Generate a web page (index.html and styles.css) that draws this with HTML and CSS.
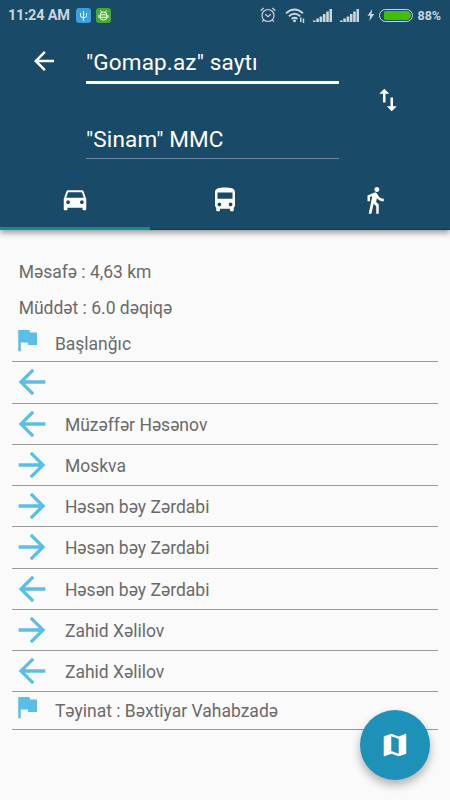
FILE: index.html
```html
<!DOCTYPE html>
<html lang="az">
<head>
<meta charset="utf-8">
<title>Gomap</title>
<link rel="stylesheet" href="styles.css">
</head>
<body>
<svg class="defs" width="0" height="0">
  <symbol id="back" viewBox="0 0 24 24"><path d="M20 11H7.83l5.59-5.59L12 4l-8 8 8 8 1.41-1.41L7.83 13H20v-2z"/></symbol>
  <symbol id="forward" viewBox="0 0 24 24"><path d="M12 4l-1.41 1.41L16.17 11H4v2h12.17l-5.58 5.59L12 20l8-8z"/></symbol>
  <symbol id="flag" viewBox="0 0 24 24"><path d="M14.4 6L14 4H5v17h2v-7h5.6l.4 2h7V6z"/></symbol>
  <symbol id="signal" viewBox="0 0 19 14"><path d="M0 12.500h2.600v1.500H0zM3.300 10.500h2.600v3.500H3.300zM6.600 8.500h2.600v5.500H6.600zM9.900 6h2.600v8H9.900zM13.200 3.500h2.600v10.500h-2.600zM16.500 1h2.500v13h-2.500z"/></symbol>
</svg>
<header class="header">
  <div class="status">
    <span class="time">11:24 AM</span>
    <svg class="badge usb" viewBox="0 0 15 15"><rect width="15" height="15" rx="3"/><path d="M7.500 3v9.500M4.500 5v3q0 1.300 3 1.800 3-.5 3-1.800V5M6.600 12h1.800"/></svg>
    <svg class="badge droid" viewBox="0 0 15 15"><rect width="15" height="15" rx="3"/><path d="M4.200 6.800q0-2.800 3.300-2.800t3.300 2.800zM4.200 7v2.500q0 2.500 3.300 2.500t3.300-2.500V7M4.500 2.500l1.300 1.700M10.500 2.500L9.200 4.200M3 7v3M12 7v3M4.500 9.300h6"/></svg>
    <svg class="alarm" viewBox="0 0 16 16"><circle cx="8" cy="8.500" r="6"/><path d="M5.200 7.300L8 9.600l2.800-2.300M.7 3.800L3.600 1M15.300 3.800L12.400 1M3.700 13l-1.500 1.700M12.300 13l1.500 1.700"/></svg>
    <svg class="wifi" viewBox="0 0 20 15"><path class="arc" d="M1 5.300q8.500-7.500 17 0M3.800 8.200q5.700-4.900 11.400 0M6.500 10.900q3-2.400 6 0"/><circle cx="9.500" cy="12.800" r="1.500"/><path d="M15 9.500h1.500v4.500H15zM17.700 10.500h1.500v4.500h-1.500z"/></svg>
    <svg class="signal"><use href="#signal"/></svg>
    <svg class="signal second"><use href="#signal"/></svg>
    <svg class="bolt" viewBox="0 0 8 12"><path d="M5.300 0L.5 6.700h2.700L2.300 12l5-7H4.500z"/></svg>
    <span class="battery"><span class="charge"></span></span>
    <span class="percent">88%</span>
  </div>
  <div class="search">
    <svg class="icon back"><use href="#back"/></svg>
    <div class="fields">
      <div class="field active">"Gomap.az" saytı</div>
      <div class="field">"Sinam" MMC</div>
    </div>
    <svg class="icon swap" viewBox="0 0 24 24"><path d="M16 17.010V10h-2v7.010h-3L15 21l4-3.990h-3zM9 3L5 6.990h3V14h2V6.990h3L9 3z"/></svg>
  </div>
  <nav class="tabs">
    <div class="tab selected"><svg class="icon car" viewBox="0 0 24 24"><path d="M18.920 6.010C18.720 5.420 18.160 5 17.500 5h-11c-.66 0-1.210.42-1.420 1.010L3 12v8c0 .55.45 1 1 1h1c.55 0 1-.45 1-1v-1h12v1c0 .55.45 1 1 1h1c.55 0 1-.45 1-1v-8l-2.080-5.990zM6.500 16c-.83 0-1.500-.67-1.500-1.500S5.670 13 6.500 13s1.500.67 1.500 1.500S7.330 16 6.500 16zm11 0c-.83 0-1.500-.67-1.500-1.500s.67-1.500 1.500-1.500 1.500.67 1.500 1.500-.67 1.500-1.500 1.500zM5 11l1.500-4.500h11L19 11H5z"/></svg></div>
    <div class="tab"><svg class="icon" viewBox="0 0 24 24"><path d="M4 16c0 .88.39 1.670 1 2.220V20c0 .55.45 1 1 1h1c.55 0 1-.45 1-1v-1h8v1c0 .55.45 1 1 1h1c.55 0 1-.45 1-1v-1.780c.61-.55 1-1.340 1-2.220V6c0-3.500-3.580-4-8-4s-8 .5-8 4v10zm3.500 1c-.83 0-1.500-.67-1.500-1.500S6.670 14 7.500 14s1.500.67 1.500 1.500S8.330 17 7.500 17zm9 0c-.83 0-1.500-.67-1.500-1.500s.67-1.500 1.500-1.500 1.500.67 1.500 1.500-.67 1.500-1.500 1.500zm1.500-6H6V6h12v5z"/></svg></div>
    <div class="tab"><svg class="icon" viewBox="0 0 24 24"><path d="M13.500 5.500c1.100 0 2-.9 2-2s-.9-2-2-2-2 .9-2 2 .9 2 2 2zM9.800 8.900L7 23h2.100l1.800-8 2.100 2v6h2v-7.500l-2.100-2 .6-3C14.800 12 16.800 13 19 13v-2c-1.900 0-3.500-1-4.300-2.400l-1-1.600c-.4-.6-1-1-1.700-1-.3 0-.5.1-.8.1L6 8.300V13h2V9.600l1.800-.7"/></svg></div>
  </nav>
</header>
<main class="route">
  <p class="info">Məsafə : 4,63 km</p>
  <p class="info">Müddət : 6.0 dəqiqə</p>
  <ul class="steps">
    <li class="step end"><svg><use href="#flag"/></svg><span>Başlanğıc</span></li>
    <li class="step"><svg><use href="#back"/></svg><span></span></li>
    <li class="step"><svg><use href="#back"/></svg><span>Müzəffər Həsənov</span></li>
    <li class="step"><svg><use href="#forward"/></svg><span>Moskva</span></li>
    <li class="step"><svg><use href="#forward"/></svg><span>Həsən bəy Zərdabi</span></li>
    <li class="step"><svg><use href="#forward"/></svg><span>Həsən bəy Zərdabi</span></li>
    <li class="step"><svg><use href="#back"/></svg><span>Həsən bəy Zərdabi</span></li>
    <li class="step"><svg><use href="#forward"/></svg><span>Zahid Xəlilov</span></li>
    <li class="step"><svg><use href="#back"/></svg><span>Zahid Xəlilov</span></li>
    <li class="step end"><svg><use href="#flag"/></svg><span>Təyinat : Bəxtiyar Vahabzadə</span></li>
  </ul>
</main>
<div class="fab"><svg class="icon" viewBox="0 0 24 24"><path d="M20.500 3l-.16.030L15 5.100 9 3 3.360 4.900c-.21.070-.36.250-.36.480V20.500c0 .28.220.5.5.5l.16-.030L9 18.900l6 2.100 5.640-1.900c.21-.070.36-.250.36-.480V3.500c0-.28-.22-.5-.5-.5zM15 19l-6-2.110V5l6 2.110V19z"/></svg></div>
</body>
</html>
```

FILE: styles.css
```css
* { box-sizing: border-box; }
body {
  margin: 0;
  height: 800px;
  overflow: hidden;
  background: #fafafa;
  color: #6a6a6a;
  font-family: Roboto, "Noto Sans", sans-serif;
}
.defs { position: absolute; }
svg { flex: none; display: block; }
.header {
  height: 230px;
  background: #194a67;
  color: #fff;
  box-shadow: 0 3px 6px rgba(0, 0, 0, .38);
}
.status {
  height: 30px;
  padding-left: 8px;
  display: flex;
  align-items: center;
  color: #cad5dc;
  fill: #cad5dc;
}
.time { width: 68px; padding-top: 1px; font-size: 14.500px; font-weight: 700; letter-spacing: -.2px; white-space: nowrap; }
.badge { width: 15px; height: 15px; fill: none; stroke: #fff; stroke-width: 1; }
.badge rect { stroke: none; }
.usb rect { fill: #3b9fe0; }
.droid { margin-left: 5px; }
.droid rect { fill: #45ab35; }
.alarm { width: 16px; height: 16px; margin-left: 149px; fill: none; stroke: #cad5dc; stroke-width: 1.2; }
.wifi { width: 20px; height: 15px; margin-left: 9px; }
.wifi .arc { fill: none; stroke: #cad5dc; stroke-width: 1.8; }
.signal { width: 19px; height: 14px; margin-left: 8px; }
.signal.second { margin-left: 8px; }
.bolt { width: 8px; height: 12px; margin-left: 8px; }
.battery {
  width: 34px;
  height: 13px;
  margin-left: 4px;
  padding: 1px 1px 1px 4px;
  border: 1.500px solid #cad5dc;
  border-radius: 7px;
}
.charge { display: block; height: 100%; border-radius: 2px 5px 5px 2px; background: #43bd05; }
.percent { margin-left: 4.500px; padding-top: 1px; font-size: 12.500px; font-weight: 700; }
.search { height: 140px; display: flex; align-items: flex-start; }
.icon { width: 30px; height: 30px; fill: #fff; }
.back { margin: 16px 0 0 29px; }
.fields { width: 253px; margin-left: 27px; }
.field {
  height: 75px;
  padding-top: 41px;
  font-size: 22.500px;
  line-height: 28px;
  letter-spacing: .15px;
  border-bottom: 1px solid #7188a2;
}
.field.active { height: 54px; padding-top: 18px; border-bottom: 3px solid #fff; }
.swap { margin: 55px 0 0 34px; }
.tabs { height: 60px; display: grid; grid-template-columns: repeat(3, 1fr); }
.tab { display: flex; justify-content: center; padding-top: 15px; border-bottom: 1px solid #0d365a; }
.tab .car { margin-top: -1px; }
.tab.selected { border-bottom: 3px solid #089585; }
.route { padding: 23.750px 12.500px 0 12.400px; font-size: 17.500px; }
.info { margin: 0 0 0 6.250px; height: 36px; line-height: 36px; }
.steps { margin: 0; padding: 0; list-style: none; }
.step {
  height: 41.250px;
  display: flex;
  align-items: center;
  border-bottom: 1px solid #999;
}
.step svg { width: 40px; height: 40px; fill: #5abfe8; }
.step span { margin-left: 12.500px; padding-top: 2px; }
.step.end { height: 37.250px; align-items: flex-start; }
.step.end:first-child { height: 36.500px; }
.step.end svg { width: 30px; height: 30px; margin-top: -.5px; }
.step.end span { padding-top: 9px; }
.step.end:first-child span { padding-top: 8px; }
.fab {
  position: absolute;
  left: 360px;
  top: 710px;
  width: 70px;
  height: 70px;
  display: flex;
  align-items: center;
  justify-content: center;
  border-radius: 50%;
  background: #1e91b9;
  box-shadow: 0 5px 10px rgba(0, 0, 0, .3);
}
```
